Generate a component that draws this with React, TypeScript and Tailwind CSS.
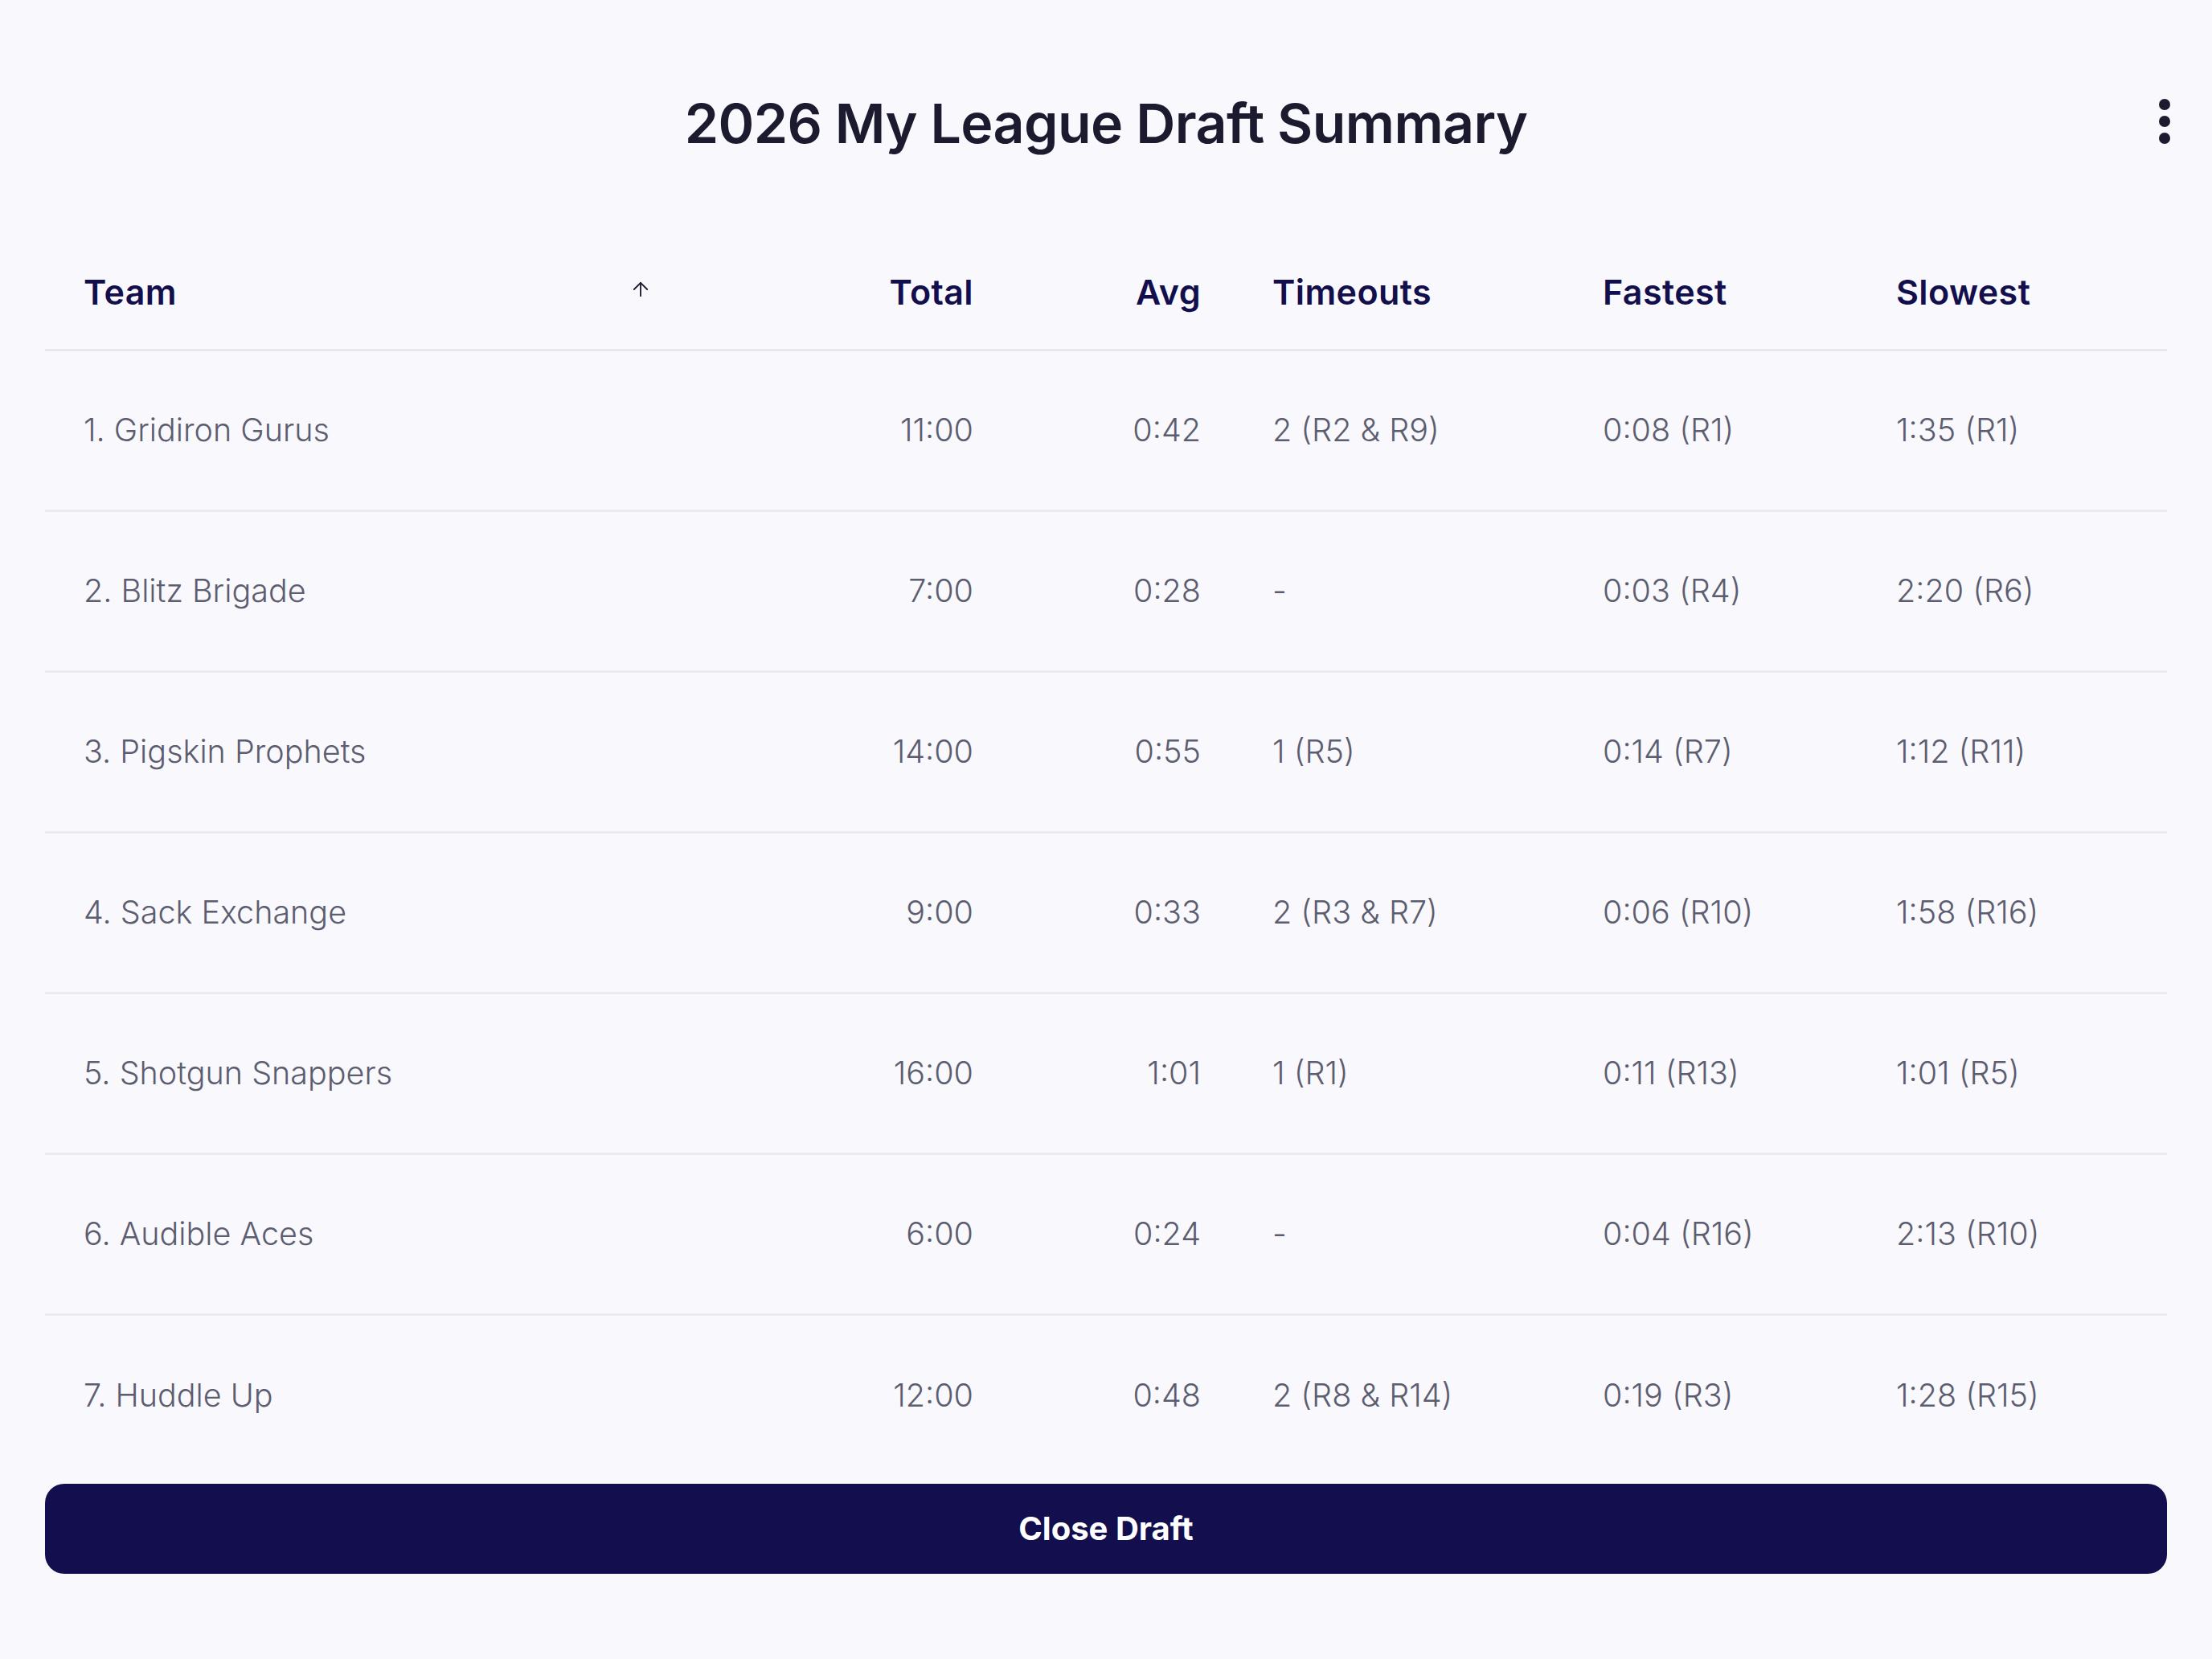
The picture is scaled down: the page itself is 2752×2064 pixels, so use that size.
import { ArrowUp } from "lucide-react";

type Row = {
  team: string;
  total: string;
  avg: string;
  timeouts: string;
  fastest: string;
  slowest: string;
};

const rows: Row[] = [
  { team: "1. Gridiron Gurus", total: "11:00", avg: "0:42", timeouts: "2 (R2 & R9)", fastest: "0:08 (R1)", slowest: "1:35 (R1)" },
  { team: "2. Blitz Brigade", total: "7:00", avg: "0:28", timeouts: "-", fastest: "0:03 (R4)", slowest: "2:20 (R6)" },
  { team: "3. Pigskin Prophets", total: "14:00", avg: "0:55", timeouts: "1 (R5)", fastest: "0:14 (R7)", slowest: "1:12 (R11)" },
  { team: "4. Sack Exchange", total: "9:00", avg: "0:33", timeouts: "2 (R3 & R7)", fastest: "0:06 (R10)", slowest: "1:58 (R16)" },
  { team: "5. Shotgun Snappers", total: "16:00", avg: "1:01", timeouts: "1 (R1)", fastest: "0:11 (R13)", slowest: "1:01 (R5)" },
  { team: "6. Audible Aces", total: "6:00", avg: "0:24", timeouts: "-", fastest: "0:04 (R16)", slowest: "2:13 (R10)" },
  { team: "7. Huddle Up", total: "12:00", avg: "0:48", timeouts: "2 (R8 & R14)", fastest: "0:19 (R3)", slowest: "1:28 (R15)" },
];

const grid = "grid grid-cols-[803px_400px_276px_411px_365px_1fr] items-center";

export default function App() {
  return (
    <div
      className="w-[2752px] h-[2064px] bg-[#f8f8fd] px-[56px] flex flex-col overflow-hidden"
      style={{ fontFamily: "Inter, 'Noto Sans', sans-serif" }}
    >
      {/* title */}
      <div className="relative h-[306px] flex items-center justify-center shrink-0">
        <h1 className="text-[68px] font-semibold text-[#1c1a2e] tracking-[-0.6px]">
          2026 My League Draft Summary
        </h1>
        <button className="absolute right-[-8px] top-[119px] flex flex-col items-center gap-[7px] p-[4px]">
          <span className="w-[14px] h-[14px] rounded-full bg-[#1c1a2e]" />
          <span className="w-[14px] h-[14px] rounded-full bg-[#1c1a2e]" />
          <span className="w-[14px] h-[14px] rounded-full bg-[#1c1a2e]" />
        </button>
      </div>

      {/* table */}
      <div className="h-[1508px] overflow-hidden shrink-0">
        <div className={`${grid} h-[131px] pb-[13px] border-b-[3px] border-[#e6e8f0] text-[43px] font-semibold tracking-[0.4px] text-[#130f4d]`}>
          <div className="pl-[48px] pr-[48px] flex items-center justify-between">
            <span>Team</span>
            <ArrowUp size={28} strokeWidth={1.6} className="text-[#1c1a2e] mb-[8px]" />
          </div>
          <div className="pr-[48px] text-right">Total</div>
          <div className="pr-[41px] text-right">Avg</div>
          <div className="pl-[48px]">Timeouts</div>
          <div className="pl-[48px]">Fastest</div>
          <div className="pl-[48px]">Slowest</div>
        </div>
        {rows.map((r, i) => (
          <div
            key={r.team}
            className={`${grid} h-[200px] text-[39.5px] font-light text-[#5d5d70] ${i < rows.length - 1 ? "border-b-[3px] border-[#eaebf2]" : ""}`}
          >
            <div className="pl-[48px]">{r.team}</div>
            <div className="pr-[48px] text-right">{r.total}</div>
            <div className="pr-[41px] text-right">{r.avg}</div>
            <div className="pl-[48px]">{r.timeouts}</div>
            <div className="pl-[48px]">{r.fastest}</div>
            <div className="pl-[48px]">{r.slowest}</div>
          </div>
        ))}
      </div>

      <button className="mt-[32px] h-[112px] shrink-0 w-full rounded-[24px] bg-[#130e4e] text-white text-[40px] font-bold">
        Close Draft
      </button>
    </div>
  );
}
